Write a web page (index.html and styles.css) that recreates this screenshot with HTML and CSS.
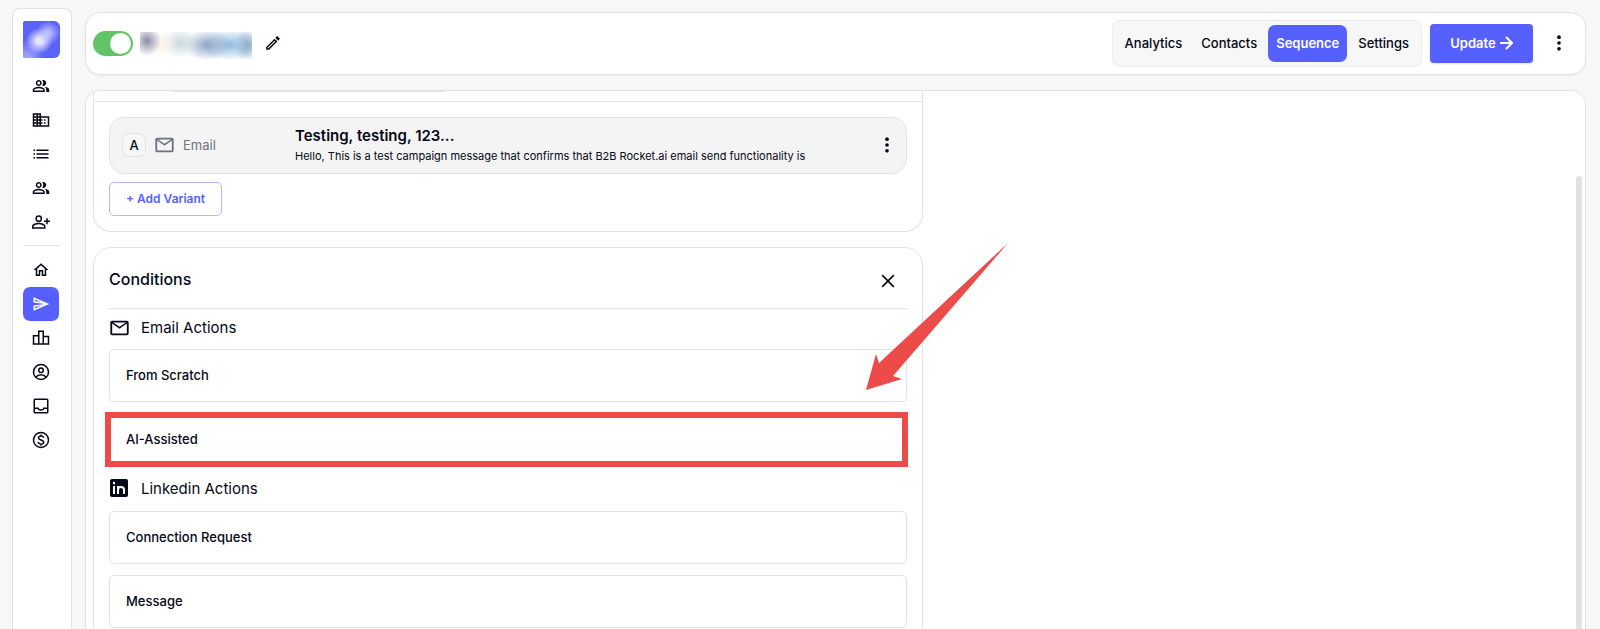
FILE: index.html
```html
<!DOCTYPE html>
<html lang="en">
<head>
<meta charset="utf-8">
<title>Campaign sequence</title>
<link rel="stylesheet" href="styles.css">
</head>
<body>
<svg class="defs" aria-hidden="true">
  <symbol id="people" viewBox="0 0 24 24"><path d="M16.67 13.13C18.04 14.06 19 15.32 19 17v3h4v-3c0-2.18-3.57-3.47-6.33-3.87zM15 12c2.21 0 4-1.79 4-4s-1.79-4-4-4c-.47 0-.91.1-1.33.24C14.5 5.27 15 6.58 15 8s-.5 2.73-1.33 3.76c.42.14.86.24 1.33.24zM9 12c2.21 0 4-1.79 4-4s-1.79-4-4-4-4 1.79-4 4 1.79 4 4 4zm0-6c1.1 0 2 .9 2 2s-.9 2-2 2-2-.9-2-2 .9-2 2-2zM9 13c-2.67 0-8 1.34-8 4v3h16v-3c0-2.66-5.33-4-8-4zm6 5H3v-.99C3.2 16.29 6.3 15 9 15s5.8 1.29 6 2v1z"/></symbol>
  <symbol id="mail" viewBox="0 0 24 24"><path d="M4 4h16a2 2 0 0 1 2 2v12a2 2 0 0 1-2 2H4a2 2 0 0 1-2-2V6a2 2 0 0 1 2-2zm0 3.2V18h16V7.2l-8 5.6zM5 6l7 4.600L19 6z"/></symbol>
  <symbol id="dots" viewBox="0 0 24 24"><circle cx="12" cy="5" r="2.2"/><circle cx="12" cy="12" r="2.200"/><circle cx="12" cy="19" r="2.200"/></symbol>
</svg>
<div class="app">
  <aside class="sidebar">
    <a class="logo" href="#" aria-label="Home page"><span></span></a>
    <nav class="menu" aria-label="Main">
      <a href="#" aria-label="People"><svg><use href="#people"/></svg></a>
      <a href="#" aria-label="Companies"><svg viewBox="0 0 24 24"><path d="M12 7V3H1v18h22V7H12zM6 19H3v-2h3v2zm0-4H3v-2h3v2zm0-4H3V9h3v2zm0-4H3V5h3v2zm4 12H8v-2h2v2zm0-4H8v-2h2v2zm0-4H8V9h2v2zm0-4H8V5h2v2zm11 12h-9v-2h2v-2h-2v-2h2v-2h-2V9h9v10zm-3-8h-2v2h2v-2zm0 4h-2v2h2v-2z"/></svg></a>
      <a href="#" aria-label="Lists"><svg viewBox="0 0 24 24"><path d="M2 6h2v2H2zM2 11h2v2H2zM2 16h2v2H2zM6 6h16v2H6zM6 11h16v2H6zM6 16h16v2H6z"/></svg></a>
      <a href="#" aria-label="Contacts"><svg><use href="#people"/></svg></a>
      <a href="#" aria-label="Add person"><svg viewBox="0 0 24 24"><path d="M9 3a4.500 4.500 0 1 0 0 9 4.500 4.500 0 0 0 0-9zm0 2a2.500 2.500 0 1 1 0 5 2.500 2.500 0 0 1 0-5zM9 13c-3 0-9 1.500-9 4.500V21h18v-3.500c0-3-6-4.500-9-4.500zm7 6H2v-1.500C2.300 16.500 6 15 9 15s6.700 1.500 7 2.500zM19 7h2v3h3v2h-3v3h-2v-3h-3v-2h3z"/></svg></a>
    </nav>
    <hr class="rule">
    <nav class="menu" aria-label="Workspace">
      <a href="#" aria-label="Dashboard"><svg viewBox="0 0 24 24"><path d="M12 5.690l5 4.500V18h-2v-6H9v6H7v-7.810l5-4.500M12 3L2 12h3v8h6v-6h2v6h6v-8h3L12 3z"/></svg></a>
      <a class="active" href="#" aria-label="Campaigns"><svg viewBox="0 0 24 24"><path d="M4.010 6.030l7.510 3.220-7.520-1 .01-2.220m7.500 8.720L4 17.970v-2.220l7.510-1M2.010 3L2 10l15 2-15 2 .01 7L23 12 2.010 3z"/></svg></a>
      <a href="#" aria-label="Reports"><svg viewBox="0 0 24 24"><path d="M16 9V2H8v6H1v13h22V9h-7zm-6-5h4v15h-4V4zm-7 6h5v9H3v-9zm18 9h-5v-8h5v8z"/></svg></a>
      <a href="#" aria-label="Account"><svg class="line" viewBox="0 0 24 24"><circle cx="12" cy="12" r="10"/><circle cx="12" cy="9.500" r="3"/><path d="M5 19c3.500-4.500 10.500-4.500 14 0"/></svg></a>
      <a href="#" aria-label="Inbox"><svg class="line" viewBox="0 0 24 24"><rect x="3" y="3" width="18" height="18" rx="1"/><path d="M3 15h5c1 3 7 3 8 0h5"/></svg></a>
      <a href="#" aria-label="Billing"><svg class="line" viewBox="0 0 24 24"><circle cx="12" cy="12" r="10"/><path d="M15.500 9c-.3-1.800-1.800-2.500-3.500-2.500-2 0-3.400 1-3.400 2.600 0 3.700 7 1.900 7 5.700 0 1.700-1.600 2.700-3.600 2.700s-3.500-1-3.700-2.800M12 4.500v2.500M12 17v2.500"/></svg></a>
    </nav>
  </aside>

  <main class="main">
    <header class="topbar">
      <input class="toggle" type="checkbox" role="switch" aria-label="Campaign active" checked>
      <span class="name"></span>
      <button class="icon-btn" aria-label="Rename"><svg class="pencil" viewBox="0 0 24 24"><path d="M14.060 9.020l.92.92L5.920 19H5v-.92l9.060-9.060M17.660 3c-.25 0-.51.1-.7.290l-1.830 1.830 3.750 3.750 1.830-1.830c.39-.39.39-1.020 0-1.410l-2.340-2.340c-.2-.2-.45-.29-.71-.29zm-3.600 3.190L3 17.250V21h3.750L17.810 9.940l-3.750-3.750z"/></svg></button>
      <nav class="tabs" aria-label="Campaign">
        <a href="#">Analytics</a>
        <a href="#">Contacts</a>
        <a class="active" href="#">Sequence</a>
        <a href="#">Settings</a>
      </nav>
      <button class="update">Update<svg viewBox="0 0 14 14"><path d="M1 7h11M7 1l6 6-6 6"/></svg></button>
      <button class="icon-btn more" aria-label="More options"><svg><use href="#dots"/></svg></button>
    </header>

    <div class="panel">
      <div class="column">
        <section class="card step">
          <div class="step-head"><span></span></div>
          <div class="step-body">
            <article class="variant">
              <span class="badge">A</span>
              <svg class="mail"><use href="#mail"/></svg>
              <span class="kind">Email</span>
              <div class="message">
                <h3>Testing, testing, 123...</h3>
                <p>Hello, This is a test campaign message that confirms that B2B Rocket.ai email send functionality is</p>
              </div>
              <button class="icon-btn" aria-label="Variant options"><svg><use href="#dots"/></svg></button>
            </article>
            <button class="add">+ Add Variant</button>
          </div>
        </section>

        <section class="card conditions">
          <div class="cond-head">
            <h2>Conditions</h2>
            <button class="icon-btn" aria-label="Close"><svg class="line" viewBox="0 0 24 24"><path d="M5 5l14 14M19 5L5 19"/></svg></button>
          </div>
          <h4 class="group"><svg class="mail"><use href="#mail"/></svg>Email Actions</h4>
          <div class="options">
            <button class="option">From Scratch</button>
            <div class="marked">
              <button class="option">AI-Assisted</button>
              <svg class="arrow" viewBox="0 0 143 147" aria-hidden="true"><path d="M142 0L27 133 36 136 0 147 10 111 13 120z"/></svg>
            </div>
          </div>
          <h4 class="group"><svg class="linkedin" viewBox="0 0 18 18"><rect width="18" height="18" rx="2"/><path d="M4 7v8M4 3v2.200M8 15V7M8 11c0-4 6-4 6 0v4"/></svg>Linkedin Actions</h4>
          <div class="options">
            <button class="option">Connection Request</button>
            <button class="option">Message</button>
          </div>
        </section>
      </div>
      <div class="scroll-thumb"></div>
    </div>
  </main>
</div>
</body>
</html>
```
FILE: styles.css
```css
* { box-sizing: border-box; }

body {
  margin: 0;
  background: #f7f7f7;
  color: #050816;
  font-family: Inter, "Liberation Sans", sans-serif;
  font-size: 13px;
}

h2, h3, h4, p { margin: 0; }
a { color: inherit; text-decoration: none; }
button { font: inherit; color: inherit; background: none; border: 0; padding: 0; }
svg { display: block; flex: none; fill: currentColor; }
.defs { position: absolute; width: 0; height: 0; }
.line { fill: none; stroke: currentColor; stroke-width: 2; }

.app {
  display: flex;
  gap: 13px;
  height: 100vh;
  padding: 8px 14px 0 12px;
  overflow: hidden;
}

/* Sidebar */
.sidebar {
  width: 60px;
  flex: none;
  padding: 12px 11px 0 10px;
  background: #fff;
  border: 1px solid #e2e2e2;
  border-bottom: 0;
  border-radius: 8px 8px 0 0;
}
.logo {
  display: block;
  width: 37px;
  height: 37px;
  margin-bottom: 11px;
  border-radius: 2px 6px 6px 2px;
  background: #5a62fb;
  overflow: hidden;
}
.logo span {
  display: block;
  width: 100%;
  height: 100%;
  background:
    radial-gradient(ellipse at 44% 54%, #e6e5fd 0 10%, transparent 46%),
    radial-gradient(ellipse at 68% 32%, #b5b6fd 0 6%, transparent 34%),
    radial-gradient(ellipse at 12% 100%, #a9aafd, transparent 36%);
}
.menu { display: grid; grid-auto-rows: 34px; }
.menu a {
  display: grid;
  place-items: center;
  width: 36px;
  border-radius: 7px;
}
.menu svg { width: 18px; height: 18px; }
.menu .active { background: #5660ff; color: #fff; }
.rule { margin: 6px 0 7px; border: 0; border-top: 1px solid #e2e2e2; }

/* Top bar */
.main {
  flex: 1;
  min-width: 0;
  display: flex;
  flex-direction: column;
  gap: 15px;
  padding-top: 4px;
}
.topbar {
  display: flex;
  align-items: center;
  height: 63px;
  flex: none;
  padding: 0 16px 1px 7px;
  background: #fff;
  border: 1px solid #e2e2e2;
  border-radius: 15px;
  box-shadow: 0 1px 2px #0000000f;
}
.toggle {
  appearance: none;
  width: 40px;
  height: 25px;
  margin: 0;
  padding: 2px;
  border-radius: 13px;
  background: #62c466;
  display: flex;
  justify-content: flex-end;
}
.toggle::before { content: ""; width: 21px; height: 21px; border-radius: 50%; background: #fff; }
.name {
  width: 112px;
  height: 27px;
  margin: 4px 11px 0 7px;
  background:
    radial-gradient(ellipse 14px 15px at 7px 9px, #8a8ca2, transparent),
    radial-gradient(ellipse 14px 15px at 22px 12px, #fbf1e8, transparent),
    radial-gradient(ellipse 18px 15px at 40px 11px, #c8d7dc, transparent),
    radial-gradient(ellipse 24px 16px at 67px 13px, #8fa5c6, transparent),
    radial-gradient(ellipse 28px 16px at 90px 13px, #8fbde2, transparent),
    radial-gradient(ellipse 14px 16px at 107px 13px, #8aa2ba, transparent);
}
.icon-btn { display: grid; place-items: center; width: 20px; height: 24px; }
.icon-btn svg { width: 20px; height: 20px; }
.icon-btn .pencil { width: 18px; height: 18px; }
.tabs {
  display: flex;
  align-items: center;
  gap: 3px;
  height: 47px;
  margin-left: auto;
  padding: 0 4px;
  background: #f7f7f7;
  border: 1px solid #ededed;
  border-radius: 8px;
}
.tabs a { padding: 0 8px; line-height: 37px; border-radius: 7px; font-weight: 500; }
.tabs .active { background: #5660ff; color: #fff; font-weight: 600; }
.update {
  display: flex;
  align-items: center;
  justify-content: center;
  gap: 3px;
  width: 103px;
  height: 39px;
  margin: 0 16px 0 8px;
  background: #5660ff;
  border-radius: 4px;
  color: #fff;
  font-weight: 600;
  box-shadow: 0 1px 2px #0000001a;
}
.update svg { width: 14px; height: 14px; fill: none; stroke: currentColor; stroke-width: 2; }

/* Scrolling panel */
.panel {
  position: relative;
  flex: 1;
  min-height: 0;
  padding: 0 7px;
  background: #fff;
  border: 1px solid #e2e2e2;
  border-bottom: 0;
  border-radius: 15px 15px 0 0;
  overflow: hidden;
}
.column { width: 56%; max-width: 830px; }
.scroll-thumb {
  position: absolute;
  top: 85px;
  right: 3px;
  bottom: 0;
  width: 6px;
  border-radius: 3px 3px 0 0;
  background: #e2e2e2;
}
.card { border: 1px solid #e2e2e2; border-radius: 18px; }
.step { border-top: 0; border-radius: 0 0 18px 18px; margin-bottom: 15px; }
.step-head {
  height: 11px;
  padding-left: 79px;
  border-bottom: 1px solid #e2e2e2;
  border-radius: 0 0 0 4px;
}
.step-head span { display: block; width: 272px; height: 1px; background: #e0e0e8; }
.step-body { padding: 15px; }
.variant {
  display: flex;
  align-items: center;
  height: 57px;
  margin-bottom: 8px;
  padding: 0 9px 1px 12px;
  background: #f4f4f4;
  border: 1px solid #e2e2e2;
  border-radius: 15px;
}
.badge {
  display: grid;
  place-items: center;
  width: 24px;
  height: 24px;
  margin-right: 7px;
  border: 1px solid #e2e2e2;
  border-radius: 7px;
  background: #f7f7f7;
  font-weight: 500;
}
.mail { width: 23px; height: 22px; }
.variant .mail, .kind { color: #6b7280; }
.kind { width: 112px; margin-left: 7px; }
.message { flex: 1; }
.message h3 { font-size: 15px; line-height: 22px; font-weight: 600; }
.message p { font-size: 11px; line-height: 18px; }
.add {
  display: block;
  width: 113px;
  height: 34px;
  padding-bottom: 2px;
  border: 1px solid #b4b7ff;
  border-radius: 5px;
  color: #5660ff;
  font-size: 12px;
  font-weight: 600;
}

.conditions { padding: 0 15px 15px; }
.cond-head {
  display: flex;
  align-items: center;
  justify-content: space-between;
  height: 61px;
  padding: 6px 9px 0 0;
  border-bottom: 1px solid #e2e2e2;
}
.cond-head h2 { font-size: 16px; line-height: 24px; font-weight: 500; padding-bottom: 4px; }
.group {
  display: flex;
  align-items: center;
  gap: 10px;
  height: 40px;
  padding-bottom: 3px;
  font-size: 15px;
  font-weight: 400;
}
.group .mail { margin-left: -1px; }
.linkedin { width: 18px; height: 18px; margin: 0 3px 0 1px; }
.linkedin path { fill: none; stroke: #fff; stroke-width: 2; }
.options { display: grid; gap: 11px; }
.option {
  display: block;
  width: 100%;
  height: 53px;
  padding: 0 16px 2px;
  border: 1px solid #e2e2e2;
  border-radius: 5px;
  text-align: left;
  font-weight: 500;
}
.options + .group { height: 45px; padding-bottom: 1px; }

/* Callout over the suggested option */
.marked { position: relative; }
.marked::after {
  content: "";
  position: absolute;
  inset: -1px -1px -1px -4px;
  border: 6px solid #ec4b49;
  pointer-events: none;
}
.arrow {
  position: absolute;
  right: -102px;
  bottom: 76px;
  width: 143px;
  height: 147px;
  color: #ec4b49;
  z-index: 1;
}
```
